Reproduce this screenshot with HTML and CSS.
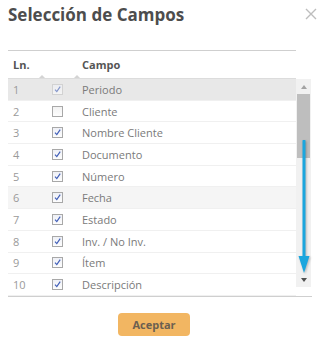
FILE: index.html
```html
<!DOCTYPE html>
<html lang="es">
<head>
  <meta charset="UTF-8">
  <meta name="viewport" content="width=device-width, initial-scale=1.0">
  <title>Selección de Campos</title>
  <link rel="stylesheet" href="styles.css">
</head>
<body>
  <div class="dialog">
    <div class="dialog-head">
      <h1>Selección de Campos</h1>
      <span class="close">
        <svg width="12" height="12" viewBox="0 0 12 12"><path d="M1 1 L11 11 M11 1 L1 11" stroke="#bdbdbd" stroke-width="1.4" fill="none"/></svg>
      </span>
    </div>

    <div class="grid">
      <div class="grid-head">
        <div class="col-ln">Ln.<span class="sort"></span></div>
        <div class="col-chk"><span class="sort"></span></div>
        <div class="col-campo">Campo</div>
      </div>

      <div class="grid-body">
        <div class="rows">
          <div class="row selected"><div class="col-ln">1</div><div class="col-chk"><span class="chk on disabled"></span></div><div class="col-campo">Periodo</div></div>
          <div class="row"><div class="col-ln">2</div><div class="col-chk"><span class="chk"></span></div><div class="col-campo">Cliente</div></div>
          <div class="row"><div class="col-ln">3</div><div class="col-chk"><span class="chk on"></span></div><div class="col-campo">Nombre Cliente</div></div>
          <div class="row"><div class="col-ln">4</div><div class="col-chk"><span class="chk on"></span></div><div class="col-campo">Documento</div></div>
          <div class="row"><div class="col-ln">5</div><div class="col-chk"><span class="chk on"></span></div><div class="col-campo">Número</div></div>
          <div class="row hover"><div class="col-ln">6</div><div class="col-chk"><span class="chk on"></span></div><div class="col-campo">Fecha</div></div>
          <div class="row"><div class="col-ln">7</div><div class="col-chk"><span class="chk on"></span></div><div class="col-campo">Estado</div></div>
          <div class="row"><div class="col-ln">8</div><div class="col-chk"><span class="chk on"></span></div><div class="col-campo">Inv. / No Inv.</div></div>
          <div class="row"><div class="col-ln">9</div><div class="col-chk"><span class="chk on"></span></div><div class="col-campo">Ítem</div></div>
          <div class="row"><div class="col-ln">10</div><div class="col-chk"><span class="chk on"></span></div><div class="col-campo">Descripción</div></div>
        </div>

        <div class="scrollbar">
          <div class="sb-btn up"></div>
          <div class="sb-thumb"></div>
          <div class="sb-track"></div>
          <div class="sb-btn down"></div>
        </div>

        <!-- scroll hint -->
        <svg class="hint-arrow" width="14" height="136" viewBox="0 0 14 136">
          <line x1="7" y1="1" x2="7" y2="120" stroke="#1ba6de" stroke-width="3" stroke-linecap="round"/>
          <path d="M1.5 116 L12.5 116 L7 133 Z" fill="#1ba6de"/>
        </svg>
      </div>
    </div>

    <div class="dialog-foot">
      <button class="btn">Aceptar</button>
    </div>
  </div>
</body>
</html>
```

FILE: styles.css
```css
html, body {
  margin: 0;
  background: #fff;
  font-family: "Open Sans", Arial, sans-serif;
}
.dialog {
  width: 319px;
  height: 340px;
  padding: 4px 0 0 8px;
  box-sizing: border-box;
}
.dialog-head {
  display: flex;
  justify-content: space-between;
  align-items: flex-start;
}
h1 {
  margin: 0;
  font-size: 17px;
  line-height: 22px;
  font-weight: bold;
  color: #4d4d4d;
}
.close {
  display: block;
  margin: 4px 2px 0 0;
  width: 12px;
  height: 12px;
}
.close svg {
  display: block;
}
.grid {
  margin-top: 24px;
  width: 304px;
  font-size: 11px;
}
.grid-head {
  display: flex;
  width: 288px;
  height: 29px;
  box-sizing: border-box;
  border-top: 1px solid #cfcfcf;
  border-bottom: 1px solid #dcdcdc;
  align-items: center;
  font-weight: bold;
  color: #555;
}
.col-ln {
  position: relative;
  width: 34px;
  padding-left: 5px;
  box-sizing: border-box;
}
.col-chk {
  position: relative;
  width: 35px;
  padding-left: 10px;
  box-sizing: border-box;
  height: 100%;
  display: flex;
  align-items: center;
}
.col-campo {
  padding-left: 5px;
}
.grid-head .col-ln, .grid-head .col-chk {
  height: 100%;
  display: flex;
  align-items: center;
}
.sort {
  position: absolute;
  right: -3px;
  bottom: 0;
  width: 0;
  height: 0;
  border-left: 3px solid transparent;
  border-right: 3px solid transparent;
  border-bottom: 3px solid #d4d4d4;
}
.grid-body {
  position: relative;
  display: flex;
  align-items: flex-start;
  border-bottom: 1px solid #cfcfcf;
}
.rows {
  width: 288px;
}
.row {
  display: flex;
  align-items: center;
  height: 21.7px;
  box-sizing: border-box;
  border-bottom: 1px solid #f0f0f0;
  color: #7a7a7a;
}
.row .col-ln {
  color: #9a9a9a;
}
.row.selected {
  background: #e8e8e8;
}
.row.hover {
  background: #f5f5f5;
}
.chk {
  display: block;
  width: 11px;
  height: 11px;
  box-sizing: border-box;
  border: 1px solid #a8a8a8;
  background: linear-gradient(#f2f2f2, #fdfdfd);
}
.chk.on {
  background: no-repeat center / 9px 9px url("data:image/svg+xml,%3Csvg xmlns='http://www.w3.org/2000/svg' viewBox='0 0 9 9'%3E%3Cpath d='M2 4.6 L3.8 6.6 L7.2 1.6' stroke='%23415fb8' stroke-width='1.2' fill='none'/%3E%3C/svg%3E"), linear-gradient(#eef0f6, #fdfdfd);
}
.chk.disabled {
  border-color: #c4c4c4;
  opacity: 0.6;
}
.scrollbar {
  width: 15px;
  height: 208px;
  background: #f1f1f1;
  display: flex;
  flex-direction: column;
}
.sb-btn {
  height: 15px;
  display: flex;
  align-items: center;
  justify-content: center;
}
.sb-btn.up::after {
  content: "";
  border-left: 3.5px solid transparent;
  border-right: 3.5px solid transparent;
  border-bottom: 4px solid #a3a3a3;
}
.sb-btn.down::after {
  content: "";
  border-left: 3.5px solid transparent;
  border-right: 3.5px solid transparent;
  border-top: 4px solid #505050;
}
.sb-thumb {
  height: 64px;
  margin: 0 1px;
  background: #bebebe;
}
.sb-track {
  flex: 1;
}
.hint-arrow {
  position: absolute;
  left: 289px;
  top: 61px;
  filter: drop-shadow(1px 1px 1px rgba(0,0,0,0.25));
}
.dialog-foot {
  display: flex;
  justify-content: center;
  padding: 16px 19px 0 0;
}
.btn {
  width: 72px;
  height: 23px;
  border: none;
  border-radius: 4px;
  background: #f2b662;
  color: #6b5f50;
  font-family: "Open Sans", Arial, sans-serif;
  font-size: 11px;
  font-weight: bold;
  cursor: pointer;
}
```
